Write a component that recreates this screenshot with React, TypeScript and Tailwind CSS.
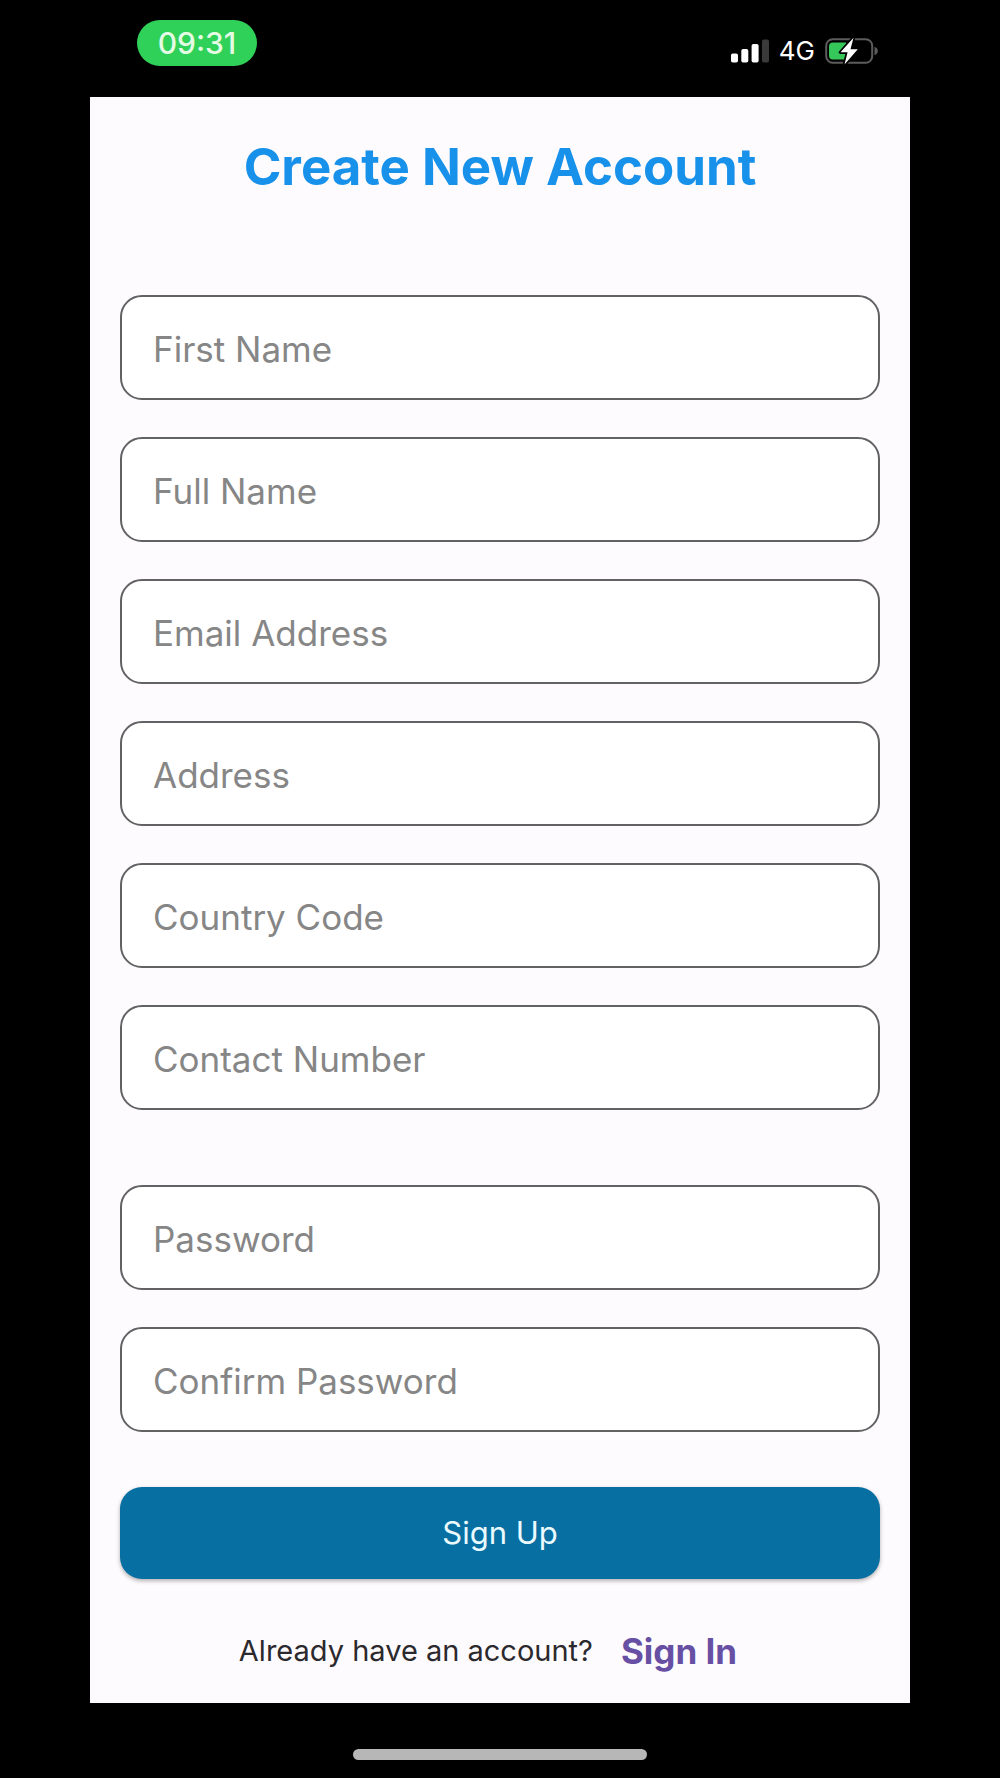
interface FieldProps {
  name: string;
  label: string;
  type?: string;
}

const Field = ({ name, label, type = "text" }: FieldProps) => {
  return (
    <input
      name={name}
      type={type}
      aria-label={label}
      placeholder={label}
      className="block w-full h-[105px] pt-[2px] px-[31px] rounded-[22px] border-2 border-[#626264] bg-white text-[35px] text-gray-900 placeholder:text-[#868686] outline-none focus:border-[#076fa1]"
    />
  );
};

const SignalIcon = () => (
  <svg width="38" height="24" viewBox="0 0 38 24" aria-hidden="true">
    <rect x="0" y="14.5" width="7" height="9" rx="1.8" fill="#fff" />
    <rect x="10.3" y="10" width="7" height="13.5" rx="1.8" fill="#fff" />
    <rect x="20.6" y="5" width="7" height="18.5" rx="1.8" fill="#fff" />
    <rect x="31" y="0.5" width="7" height="23" rx="1.8" fill="#3a3a3a" />
  </svg>
);

const BatteryIcon = () => (
  <svg width="54" height="28" viewBox="0 0 54 28" aria-hidden="true">
    <rect x="1.2" y="2.2" width="46" height="23.6" rx="6.5" fill="none" stroke="#5c5c5c" strokeWidth="2" />
    <path d="M49.5 9.8c2 .6 3.3 2.2 3.3 4.2s-1.3 3.6-3.3 4.2z" fill="#5c5c5c" />
    <path d="M8 5.5H21V22.5H8a4 4 0 0 1-4-4v-9a4 4 0 0 1 4-4z" fill="#35c759" />
    <path
      d="M28.5 0.8 15.5 15.3h7.1L19.5 27.5 32.8 12.3h-7.3z"
      fill="#fff"
      stroke="#000"
      strokeWidth="3.5"
      strokeLinejoin="round"
      paintOrder="stroke"
    />
  </svg>
);

const StatusBar = () => {
  return (
    <header className="flex items-start justify-between h-[97px] pt-5 pl-[137px] pr-[121px]">
      <div className="flex items-center justify-center h-[46px] w-[120px] rounded-full bg-[#30d158] text-[30px] font-medium text-[#e4fbe4]">
        09:31
      </div>
      <div className="flex items-center gap-[10px] h-[62px] text-white">
        <SignalIcon />
        <span className="text-[26px] leading-8">4G</span>
        <BatteryIcon />
      </div>
    </header>
  );
};

const App = () => {
  return (
    <div className="min-h-screen flex flex-col bg-black font-[Inter,'Liberation_Sans',sans-serif]">
      <StatusBar />

      <main className="mx-[90px] px-[30px] pb-7 bg-[#fefbfe]">
        <h1 className="pt-[38px] text-center text-[51px] leading-[64px] font-bold text-[#1791e9]">
          Create New Account
        </h1>

        <form className="mt-24" onSubmit={(e) => e.preventDefault()}>
          <div className="flex flex-col gap-[37px]">
            <Field name="firstName" label="First Name" />
            <Field name="fullName" label="Full Name" />
            <Field name="email" label="Email Address" type="email" />
            <Field name="address" label="Address" />
            <Field name="countryCode" label="Country Code" />
            <Field name="contactNumber" label="Contact Number" type="tel" />
          </div>

          <div className="flex flex-col gap-[37px] mt-[75px]">
            <Field name="password" label="Password" type="password" />
            <Field name="confirmPassword" label="Confirm Password" type="password" />
          </div>

          <button
            type="submit"
            className="block w-full h-[92px] mt-[55px] rounded-[22px] bg-[#076fa1] shadow-[0_2px_4px_rgba(0,0,0,0.3)] text-[31px] text-[#eafaff]"
          >
            Sign Up
          </button>
        </form>

        <div className="flex items-center justify-center gap-7 mt-12 pr-6 leading-[48px]">
          <p className="text-[29px] text-[#2b292d]">Already have an account?</p>
          <a href="#" className="text-[35px] font-bold text-[#6750a4]">
            Sign In
          </a>
        </div>
      </main>

      <div className="mx-auto mt-[46px] h-[11px] w-[294px] rounded-full bg-[#b7b7b7]" />
    </div>
  );
};

export default App;
